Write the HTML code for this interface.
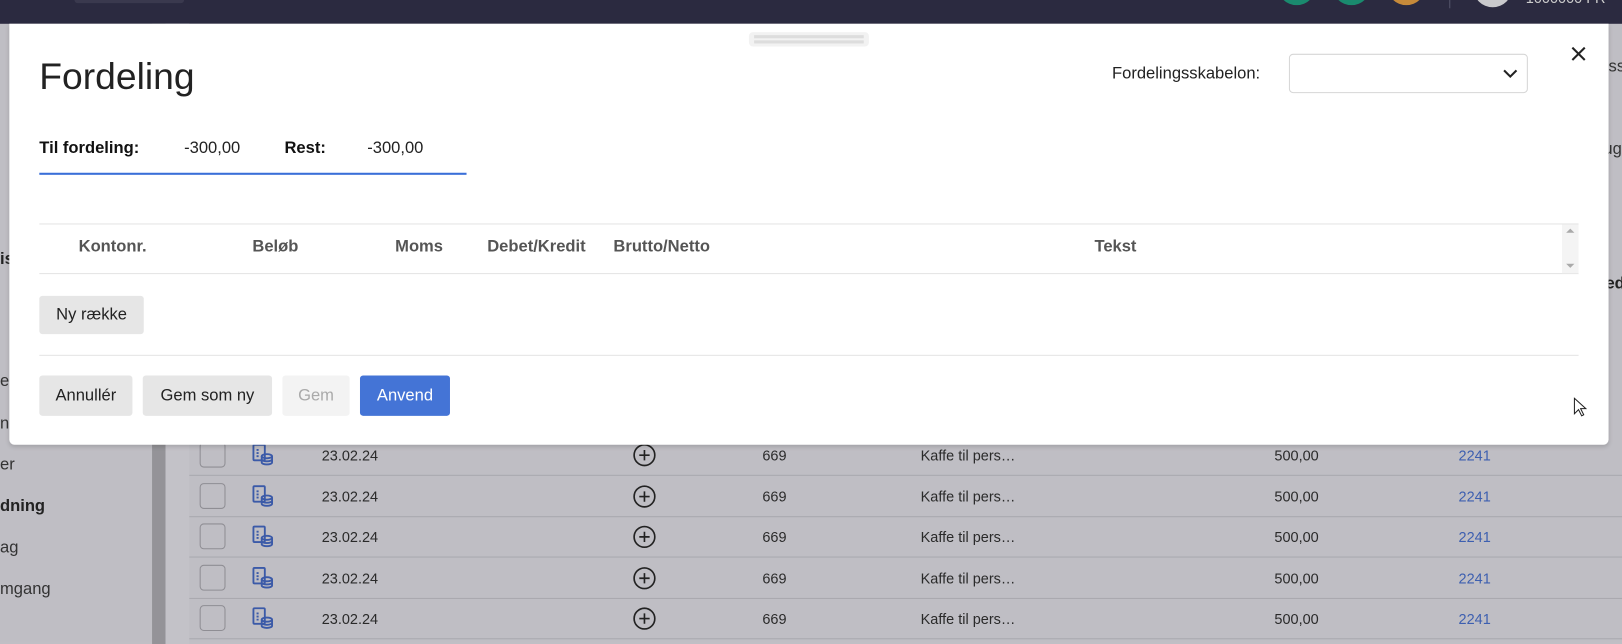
<!DOCTYPE html>
<html><head><meta charset="utf-8"><style>
*{box-sizing:border-box;margin:0;padding:0}
html,body{width:1622px;height:618px;overflow:hidden;background:#c0bfc5;font-family:"Liberation Sans",sans-serif}
#w{position:absolute;left:0;top:0;width:1568px;height:620px;transform:scale(1.03444);transform-origin:0 0;background:#bfbec4}
.a{position:absolute}
.row{position:absolute;left:183px;width:1385px;height:40px;border-bottom:1px solid #a9a8ae;font-size:14px;color:#2a2a2a}
.row span{position:absolute;top:12px}
.cb{position:absolute;left:10px;top:7px;width:25px;height:25px;border:1px solid #8f8e94;border-radius:4px}
.btn{position:absolute;top:363px;height:39px;border-radius:3px;background:#e6e6e6;font-size:16px;color:#222;display:flex;align-items:center;justify-content:center}
.th{position:absolute;top:230px;font-size:16px;font-weight:bold;color:#555}
</style></head><body><div id="w">
<div class="a" style="left:0;top:0;width:1568px;height:23px;background:#2b2a40"></div>
<div class="a" style="left:72px;top:0;width:106px;height:3px;background:#3a394e;border-radius:0 0 3px 3px"></div>
<div class="a" style="left:1235px;top:-32px;width:37px;height:37px;border-radius:50%;background:#1a8a6e"></div>
<div class="a" style="left:1288px;top:-32px;width:37px;height:37px;border-radius:50%;background:#1a8a6e"></div>
<div class="a" style="left:1341px;top:-32px;width:37px;height:37px;border-radius:50%;background:#c68a3a"></div>
<div class="a" style="left:1401px;top:0;width:1px;height:8px;background:#55546a"></div>
<div class="a" style="left:1424px;top:-31px;width:38px;height:38px;border-radius:50%;background:#c9c9cc"></div>
<div class="a" style="left:1475px;top:-10px;font-size:14px;color:#ccc">1000000 FR</div>
<div class="a" style="left:147px;top:23px;width:13px;height:600px;background:#949398"></div>
<div class="a" style="left:160px;top:23px;width:23px;height:600px;background:#c3c2c8"></div>
<div class="a" style="left:0;top:360px;font-size:16px;color:#333">ek</div>
<div class="a" style="left:0;top:401px;font-size:16px;color:#333">n</div>
<div class="a" style="left:0;top:441px;font-size:16px;color:#333">er</div>
<div class="a" style="left:0;top:481px;font-size:16px;font-weight:bold;color:#222">dning</div>
<div class="a" style="left:0;top:521px;font-size:16px;color:#333">ag</div>
<div class="a" style="left:0;top:561px;font-size:16px;color:#333">mgang</div>
<div class="a" style="left:0;top:242px;font-size:16px;font-weight:bold;color:#222">is</div>
<div class="a" style="left:1555px;top:56px;font-size:16px;color:#333">ss</div>
<div class="a" style="left:1550px;top:136px;font-size:16px;color:#333">ug</div>
<div class="a" style="left:1552px;top:266px;font-size:16px;font-weight:bold;color:#222">ed</div>
<div id="rows"></div>
<script>
var h='';for(var i=0;i<5;i++){var t=420+i*39.5;h+='<div class="row" style="top:'+t+'px"><div class="cb"></div><span style="left:60px;top:8px"><svg width="22" height="24" viewBox="0 0 22 24" fill="none" stroke="#3b5aa8" stroke-width="1.8"><rect x="2" y="2" width="11" height="15" rx="1"/><path d="M5 7h2M5 10h2M5 13h2"/><ellipse cx="15" cy="13" rx="5" ry="2"/><path d="M10 13v6c0 1.1 2.2 2 5 2s5-.9 5-2v-6M10 16c0 1.1 2.2 2 5 2s5-.9 5-2"/></svg></span><span style="left:128px">23.02.24</span><span style="left:428px;top:8px"><svg width="24" height="24" viewBox="0 0 24 24" fill="none" stroke="#222" stroke-width="1.6"><circle cx="12" cy="12" r="10"/><path d="M12 7v10M7 12h10"/></svg></span><span style="left:554px">669</span><span style="left:707px">Kaffe til pers…</span><span style="left:1049px">500,00</span><span style="left:1227px;color:#3d5fb0">2241</span></div>';}
document.getElementById('rows').innerHTML=h;
</script>
<div class="a" style="left:9px;top:23px;width:1546px;height:407px;background:#fff;border-radius:0 0 5px 5px;box-shadow:0 2px 4px rgba(0,0,0,.15)">
<div class="a" style="left:715px;top:8px;width:116px;height:14px;background:#f2f2f2;border-radius:4px"></div>
<div class="a" style="left:720px;top:11px;width:106px;height:3px;background:#ddd"></div>
<div class="a" style="left:720px;top:16px;width:106px;height:3px;background:#ddd"></div>
</div>
<div class="a" style="left:38px;top:53px;font-size:36px;color:#222">Fordeling</div>
<div class="a" style="left:1075px;top:63px;font-size:16px;color:#222">Fordelingsskabelon:</div>
<div class="a" style="left:1246px;top:52px;width:231px;height:38px;border:1px solid #d6d6d6;border-radius:4px"></div>
<svg class="a" style="left:1452px;top:65px" width="16" height="12" viewBox="0 0 16 12"><path d="M2 3l6 6 6-6" fill="none" stroke="#222" stroke-width="2"/></svg>
<svg class="a" style="left:1518px;top:44px" width="16" height="16" viewBox="0 0 16 16"><path d="M2 2l12 12M14 2L2 14" stroke="#222" stroke-width="2"/></svg>
<div class="a" style="left:38px;top:135px;font-size:16px;font-weight:bold;color:#111">Til fordeling:</div>
<div class="a" style="left:178px;top:135px;font-size:16px;color:#222">-300,00</div>
<div class="a" style="left:275px;top:135px;font-size:16px;font-weight:bold;color:#111">Rest:</div>
<div class="a" style="left:355px;top:135px;font-size:16px;color:#222">-300,00</div>
<div class="a" style="left:38px;top:167px;width:413px;height:2px;background:#3a6fd8"></div>
<div class="a" style="left:38px;top:216px;width:1488px;height:49px;border-top:1px solid #e4e4e4;border-bottom:1px solid #e4e4e4"></div>
<div class="a" style="left:1510px;top:217px;width:16px;height:47px;background:#f4f4f4"></div>
<div class="a" style="left:1514px;top:221px;border:4px solid transparent;border-bottom-color:#aaa;border-top:0"></div>
<div class="a" style="left:1514px;top:255px;border:4px solid transparent;border-top-color:#aaa;border-bottom:0"></div>
<div class="th" style="left:76px">Kontonr.</div>
<div class="th" style="left:244px">Beløb</div>
<div class="th" style="left:382px">Moms</div>
<div class="th" style="left:471px">Debet/Kredit</div>
<div class="th" style="left:593px">Brutto/Netto</div>
<div class="th" style="left:1058px">Tekst</div>
<div class="btn" style="left:38px;top:286px;width:101px;height:37px">Ny række</div>
<div class="a" style="left:38px;top:343px;width:1488px;height:1px;background:#e4e4e4"></div>
<div class="btn" style="left:38px;width:90px">Annullér</div>
<div class="btn" style="left:138px;width:125px">Gem som ny</div>
<div class="btn" style="left:273px;width:65px;background:#f3f3f3;color:#aaa">Gem</div>
<div class="btn" style="left:348px;width:87px;background:#4474d6;color:#fff">Anvend</div>
<svg class="a" style="left:1521px;top:384px" width="14" height="20" viewBox="0 0 14 20"><path d="M1 1v15l4-4 3 6 2-1-3-6h5z" fill="#fff" stroke="#222" stroke-width="1"/></svg>
</div></body></html>
